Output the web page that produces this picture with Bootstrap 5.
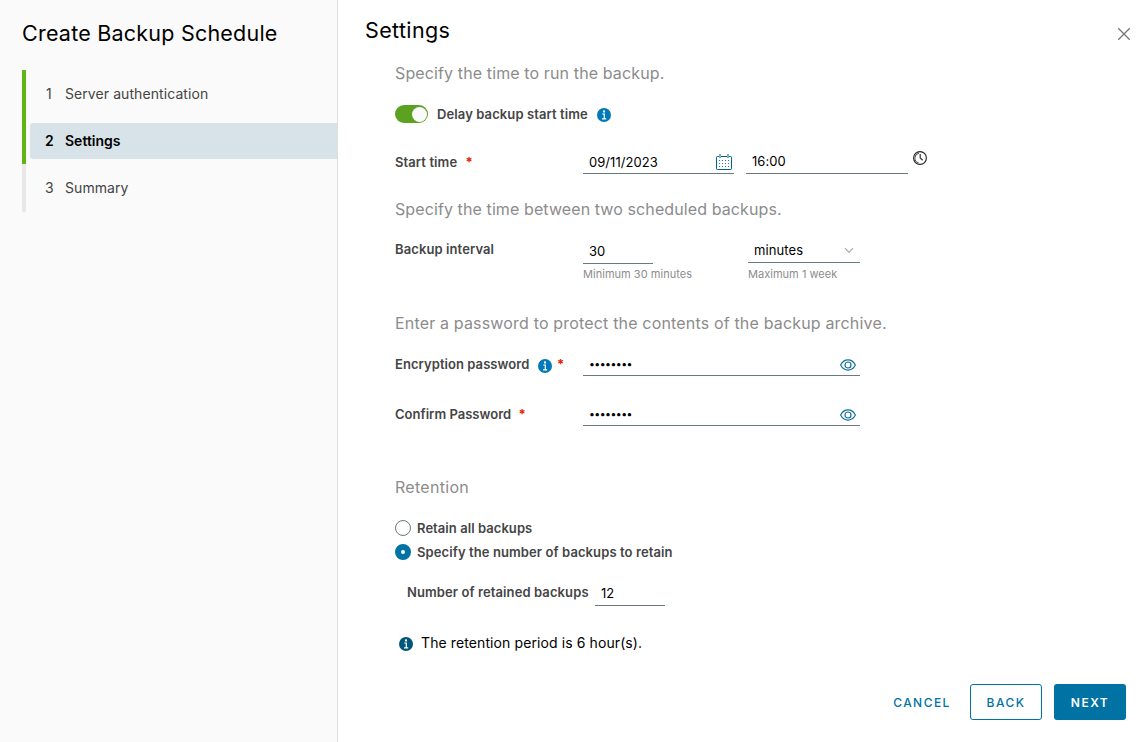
<!DOCTYPE html>
<html lang="en">
<head>
<meta charset="utf-8">
<meta name="viewport" content="width=device-width, initial-scale=1">
<title>Create Backup Schedule</title>
<link href="https://cdn.jsdelivr.net/npm/bootstrap@5.3.0/dist/css/bootstrap.min.css" rel="stylesheet">
<style>
body{font-family:Inter,"Open Sans",sans-serif;font-size:14px;line-height:24px;color:#000;background:#fff;height:742px;overflow:hidden}
svg{display:block;flex:none}
.side{width:338px;background:#fafafa;border-right:1px solid #e0e0e0;padding:18px 0 0 22px}
.wizard-title{font-size:21.5px;line-height:30px;font-weight:370;margin:0 0 22px;letter-spacing:.22px}
.steps{height:142px}
.steps li{height:47px;padding:6px 0 5px 4px;border-left:4px solid #60b515;color:#454545;letter-spacing:.08px}
.steps li:last-child{border-color:#e8e8e8;height:48px}
.steps a{display:flex;align-items:center;height:36px;padding-left:15px;color:inherit;text-decoration:none;border-radius:3px 0 0 3px}
.steps a span:first-child{width:20px}
.steps li:first-child a span:first-child{padding-left:1px}
.steps .current a{background:#d8e3e9;color:#000;font-weight:600;letter-spacing:0}
.page-title{font-size:21.5px;line-height:30px;font-weight:370;margin:-1px 0 0;letter-spacing:.36px}
.close-x{margin:11px 7px 0 0}
.fields{padding-left:57px}
.sub{font-size:16px;line-height:24px;font-weight:400;color:#8c8c8c;margin:-1px 0 17px;letter-spacing:.12px}
.lbl{font-size:13px;font-weight:600;color:#454545;line-height:24px;white-space:nowrap;letter-spacing:.1px}
.lbl-col{width:188px}
.req{color:#e12200;font-size:13px;line-height:14px;font-weight:700}
.line-in{border:0;border-bottom:1px solid #6a7a81;border-radius:0;background:transparent;padding:0 6px;font-size:13px;line-height:23px;height:24px;min-height:0;color:#000;letter-spacing:.05px}
.line-in:focus{box-shadow:none}
.line-box{border-bottom:1px solid #6a7a81;height:24px}
.hint{font-size:11px;line-height:14px;color:#8c8c8c;letter-spacing:.03px}
.toggle{width:33px;height:18px;border-radius:9px;background:#5aa220;padding:1px}
.toggle i{display:block;width:15px;height:15px;border-radius:50%;background:#fafafa;margin:.5px 0 0 auto}
.ring{width:16px;height:16px;border-radius:50%;border:1px solid #6a7a81;flex:none}
.ring.on{border:6px solid #0072a3;background:#fff}
.dots{font-size:10.5px;letter-spacing:-.55px;padding-top:2px}
.act{height:36px;border-radius:3px;font-size:12px;font-weight:500;letter-spacing:1.45px;padding:2px 0 0;color:#0072a3}
.act-line{width:72px;border:1px solid #0072a3}
.act-fill{width:72px;background:#0072a3;color:#fff;font-weight:600}
</style>
</head>
<body class="d-flex">
<svg width="0" height="0" class="position-absolute" aria-hidden="true">
<symbol id="info" viewBox="0 0 14 14"><circle cx="7" cy="7" r="7" fill="currentColor"/><circle cx="7" cy="3.500" r="1.150" fill="#fff"/><path d="M5.200 6H7.300V10.700M5 10.900H9.200" fill="none" stroke="#fff" stroke-width="1.200"/></symbol>
<symbol id="eye" viewBox="0 0 16 12"><path d="M.6 6C2.400 2.600 5 .9 8 .9S13.600 2.600 15.400 6C13.600 9.400 11 11.100 8 11.100S2.400 9.400 .6 6Z" fill="none" stroke="#0f6f9c" stroke-width="1.150"/><circle cx="8" cy="6" r="3" fill="none" stroke="#0f6f9c" stroke-width="1.200"/></symbol>
</svg>
<aside class="side flex-shrink-0">
<h1 class="wizard-title">Create Backup Schedule</h1>
<ol class="steps list-unstyled m-0">
<li><a href="#"><span>1</span><span>Server authentication</span></a></li>
<li class="current"><a href="#"><span>2</span><span>Settings</span></a></li>
<li><a href="#"><span>3</span><span>Summary</span></a></li>
</ol>
</aside>
<main class="flex-grow-1 d-flex flex-column">
<header class="d-flex justify-content-between" style="height:62px;padding:16px 10px 0 27px">
<h2 class="page-title">Settings</h2>
<svg class="close-x" width="14" height="14" viewBox="0 0 14 14"><path d="M1.300 1.300 12.700 12.700M12.700 1.300 1.300 12.700" stroke="#777" stroke-width="1.300"/></svg>
</header>
<form class="fields">
<h3 class="sub">Specify the time to run the backup.</h3>
<div class="d-flex align-items-center" style="height:24px">
<span class="toggle"><i></i></span><span class="lbl" style="margin-left:9px;width:160px">Delay backup start time</span><svg width="14" height="14" style="color:#0079b8;margin-top:2px"><use href="#info"/></svg>
</div>
<div class="d-flex" style="margin-top:24px;height:24px">
<div class="lbl lbl-col">Start time <span class="req" style="margin-left:5px">*</span></div>
<div class="line-box d-flex align-items-center justify-content-between" style="width:151px"><input class="form-control line-in border-0" style="width:110px" value="09/11/2023" aria-label="Date">
<svg width="16" height="16" viewBox="0 0 16 16" style="margin-right:2px"><rect x=".5" y="2.500" width="15" height="13" rx=".8" fill="none" stroke="#00648f"/><path d="M4 0V4M12 0V4" stroke="#80aec4" stroke-width="2"/><path d="M3 6.500H13M3 9.500H13M3 12.500H13" stroke="#2377a0" stroke-width="1" stroke-dasharray="1 2"/></svg></div>
<input class="form-control line-in" style="width:162px;margin-left:12px;padding-bottom:2px" value="16:00" aria-label="Time">
<svg width="14" height="14" viewBox="0 0 14 14" style="margin:1px 0 0 5px"><circle cx="7" cy="7" r="6.400" fill="none" stroke="#222" stroke-width="1.100"/><path d="M6 2.200A4.900 4.900 0 0 0 5.600 11.800" fill="none" stroke="#444" stroke-width="1"/><path d="M7.200 3V7L9.700 9.200" fill="none" stroke="#333" stroke-width="1.200"/></svg>
</div>
<h3 class="sub" style="margin-top:23px;letter-spacing:.1px">Specify the time between two scheduled backups.</h3>
<div class="d-flex" style="height:44px">
<div class="lbl lbl-col" style="margin-top:-1px">Backup interval</div>
<div style="width:165px"><input class="form-control line-in" style="width:70px;height:26px" value="30" aria-label="Interval"><div class="hint" style="margin-top:3px">Minimum 30 minutes</div></div>
<div><div class="line-box d-flex justify-content-between align-items-center" style="width:112px;height:25px;padding:0 6px;font-size:13px;letter-spacing:.1px"><span>minutes</span><svg width="10" height="7" viewBox="0 0 10 7"><path d="M1 1.200 5 5.400 9 1.200" fill="none" stroke="#aaa" stroke-width="1.200"/></svg></div><div class="hint" style="margin-top:4px">Maximum 1 week</div></div>
</div>
<h3 class="sub" style="margin-top:29px;letter-spacing:.17px">Enter a password to protect the contents of the backup archive.</h3>
<div class="d-flex" style="height:24px">
<div class="lbl lbl-col d-flex" style="letter-spacing:.06px"><span style="width:143px">Encryption password</span><svg width="14" height="14" style="color:#0079b8;margin-top:7px"><use href="#info"/></svg><span class="req" style="margin:5px 0 0 5px">*</span></div>
<div class="line-box d-flex align-items-center" style="width:277px"><input type="password" class="form-control line-in border-0 dots flex-grow-1" value="password" aria-label="Encryption password"><svg width="16" height="12" style="margin:2px 4px 0 0"><use href="#eye"/></svg></div>
</div>
<div class="d-flex" style="margin-top:26px;height:24px">
<div class="lbl lbl-col" style="letter-spacing:.02px">Confirm Password <span class="req ms-1">*</span></div>
<div class="line-box d-flex align-items-center" style="width:277px"><input type="password" class="form-control line-in border-0 dots flex-grow-1" value="password" aria-label="Confirm password"><svg width="16" height="12" style="margin:2px 4px 0 0"><use href="#eye"/></svg></div>
</div>
<h3 class="sub" style="margin-top:49px;letter-spacing:.3px">Retention</h3>
<div class="d-flex align-items-center"><span class="ring"></span><span class="lbl" style="margin-left:6px;letter-spacing:.06px">Retain all backups</span></div>
<div class="d-flex align-items-center"><span class="ring on"></span><span class="lbl" style="margin-left:6px">Specify the number of backups to retain</span></div>
<div class="d-flex" style="margin:16px 0 0 12px;height:26px"><span class="lbl" style="width:188px">Number of retained backups</span><input class="form-control line-in" style="width:70px;height:26px" value="12" aria-label="Retained backups"></div>
<div class="d-flex align-items-center" style="margin:25px 0 0 4px;height:24px"><svg width="14" height="14" style="color:#00567a;margin:2px 8px 0 0"><use href="#info"/></svg><span style="letter-spacing:.1px">The retention period is 6 hour(s).</span></div>
</form>
<footer class="d-flex justify-content-end mt-auto" style="padding:0 22px 22px 0;gap:12px">
<button class="btn act border-0" style="width:72px">CANCEL</button>
<button class="btn act act-line">BACK</button>
<button class="btn act act-fill">NEXT</button>
</footer>
</main>
<script src="https://cdn.jsdelivr.net/npm/bootstrap@5.3.0/dist/js/bootstrap.bundle.min.js"></script>
</body>
</html>
